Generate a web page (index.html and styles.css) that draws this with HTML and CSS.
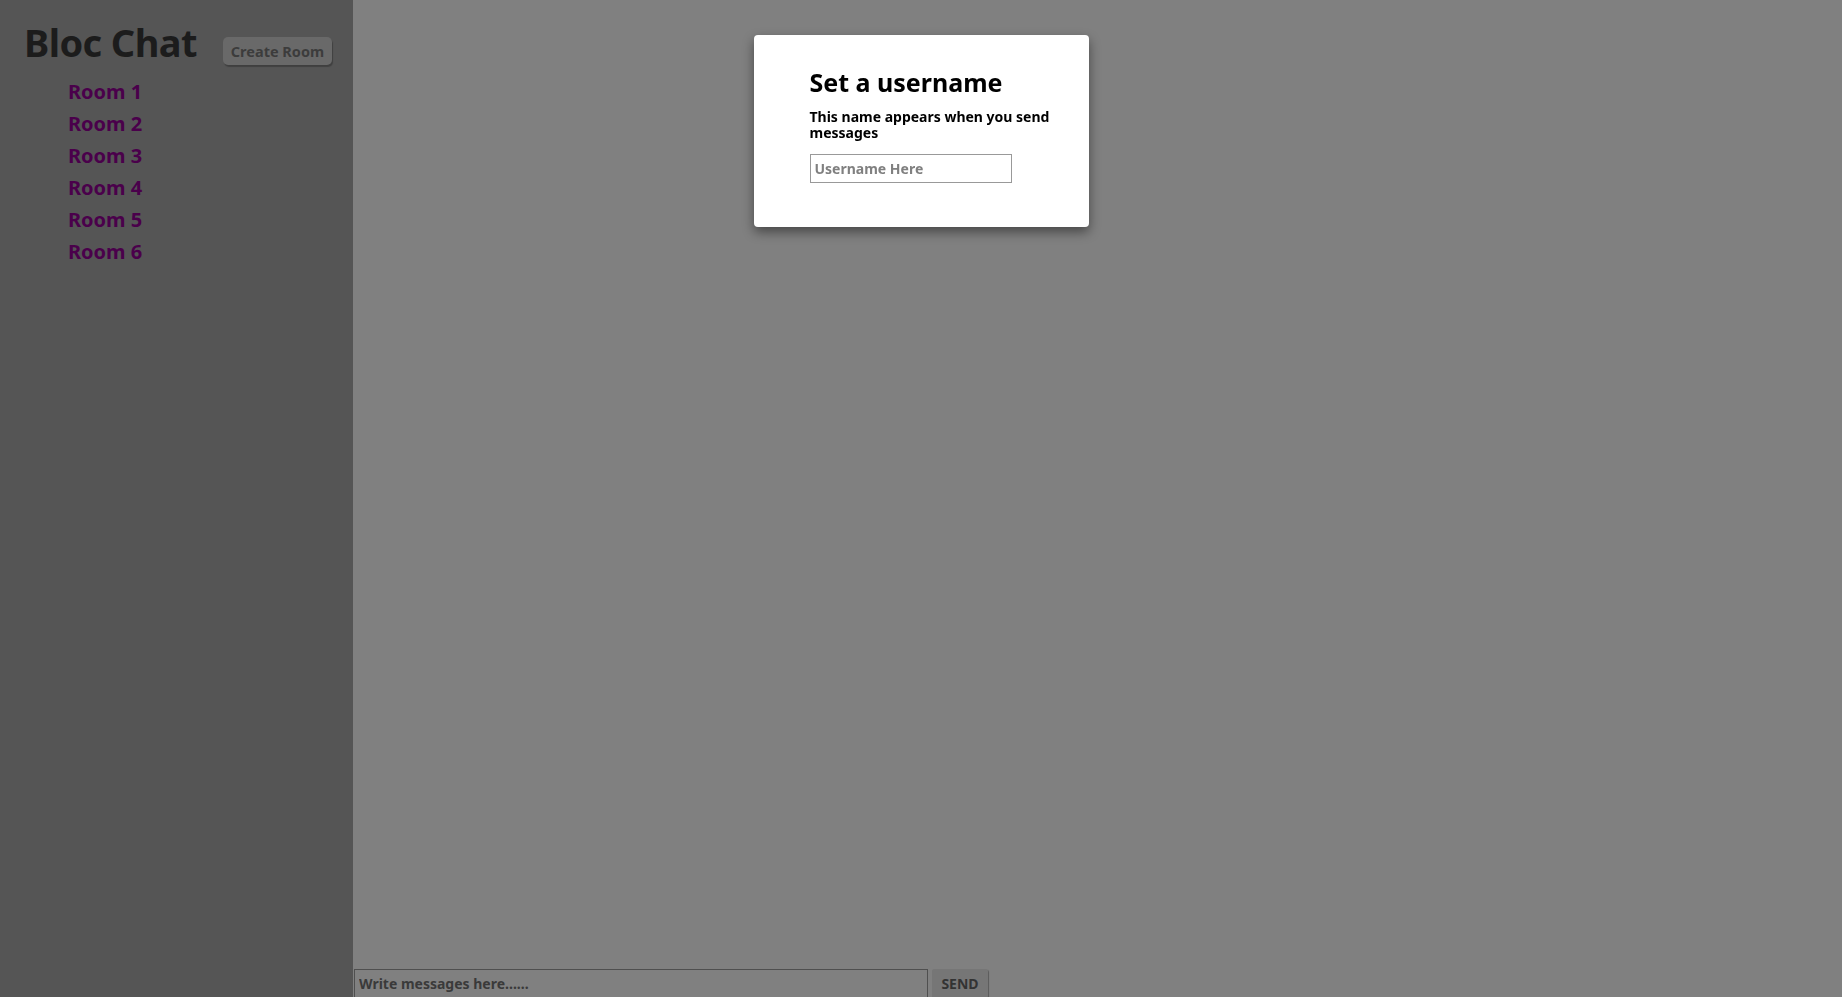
FILE: index.html
```html
<!DOCTYPE html>
<html lang="en">
<head>
<meta charset="utf-8">
<title>Bloc Chat</title>
<link rel="stylesheet" href="styles.css">
</head>
<body>
<div class="app">
  <aside class="sidebar">
    <div class="sidebar-head">
      <h1 class="brand">Bloc Chat</h1>
      <button class="create-btn" type="button">Create Room</button>
    </div>
    <ul class="rooms">
      <li class="room">Room 1</li>
      <li class="room">Room 2</li>
      <li class="room">Room 3</li>
      <li class="room">Room 4</li>
      <li class="room">Room 5</li>
      <li class="room">Room 6</li>
    </ul>
  </aside>
  <main class="main">
    <div class="messages"></div>
    <form class="composer">
      <input class="composer-input" type="text" placeholder="Write messages here......">
      <button class="send-btn" type="button">SEND</button>
    </form>
  </main>
</div>
<div class="overlay">
  <div class="modal">
    <h2 class="modal-title">Set a username</h2>
    <p class="modal-text">This name appears when you send messages</p>
    <input class="modal-input" type="text" placeholder="Username Here">
  </div>
</div>
</body>
</html>
```
FILE: styles.css
```css
html, body {
  margin: 0;
  padding: 0;
  height: 100%;
}
body {
  font-family: "Noto Sans", "Open Sans", sans-serif;
  font-weight: 700;
  background: #808080;
  overflow: hidden;
}
.app {
  display: flex;
  height: 100vh;
}
.sidebar {
  width: 353px;
  flex: none;
  background: #555555;
  padding: 17px 0 0 24px;
  box-sizing: border-box;
}
.sidebar-head {
  display: flex;
  align-items: flex-start;
  gap: 26px;
}
.brand {
  margin: 0;
  font-size: 38px;
  line-height: 50px;
  color: #1c1c1c;
  font-weight: 700;
  letter-spacing: -0.6px;
}
.create-btn {
  margin-top: 20px;
  height: 28px;
  padding: 0 8px;
  border: none;
  border-radius: 5px;
  background: #696969;
  color: #3c3c3c;
  font-family: inherit;
  font-weight: 700;
  font-size: 14.5px;
  box-shadow: 1px 2px 1px rgba(0,0,0,0.25);
}
.rooms {
  list-style: none;
  margin: 9px 0 0 44px;
  padding: 0;
}
.room {
  font-size: 20px;
  line-height: 32px;
  color: #4a004b;
}
.main {
  flex: 1;
  display: flex;
  flex-direction: column;
}
.messages {
  flex: 1;
}
.composer {
  display: flex;
  align-items: flex-start;
  gap: 4px;
  padding-left: 1px;
  height: 28px;
}
.composer-input {
  width: 574px;
  height: 34px;
  box-sizing: border-box;
  border: 1px solid #4f4f4f;
  background: #808080;
  padding: 0 4px 6px;
  font-family: inherit;
  font-weight: 700;
  font-size: 14px;
  color: #3a3a3a;
}
.composer-input::placeholder {
  color: #3a3a3a;
}
.send-btn {
  width: 56px;
  height: 29px;
  border: none;
  border-radius: 2px;
  background: #767676;
  color: #333333;
  font-family: inherit;
  font-weight: 700;
  font-size: 14px;
  box-shadow: 1px 1px 1px rgba(0,0,0,0.3);
}
.overlay {
  position: fixed;
  inset: 0;
  display: flex;
  justify-content: center;
  align-items: flex-start;
  padding-top: 35px;
}
.modal {
  width: 335px;
  height: 192px;
  box-sizing: border-box;
  background: #ffffff;
  border-radius: 4px;
  padding: 30px 24px 0 56px;
  box-shadow: 0 5px 12px rgba(0,0,0,0.45);
}
.modal-title {
  margin: 0;
  font-size: 25px;
  line-height: 34px;
  color: #000;
  font-weight: 700;
}
.modal-text {
  margin: 10px 0 0;
  font-size: 14px;
  line-height: 16px;
  color: #000;
}
.modal-input {
  margin-top: 13px;
  width: 202px;
  height: 29px;
  box-sizing: border-box;
  border: 1px solid #999;
  padding: 0 4px;
  font-family: inherit;
  font-weight: 700;
  font-size: 14px;
  color: #333;
}
.modal-input::placeholder {
  color: #808080;
}
```
